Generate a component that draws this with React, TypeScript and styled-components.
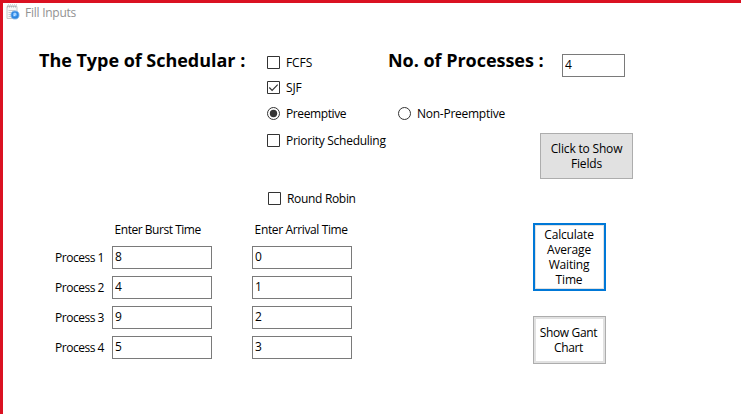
import React, { useState } from 'react';
import styled, { createGlobalStyle } from 'styled-components';

const GlobalStyle = createGlobalStyle`
  * { box-sizing: border-box; }
  body { margin: 0; background: #fff; overflow: hidden; }
`;

const Window = styled.div`
  width: 741px;
  height: 414px;
  background: #fff;
  border: solid #da1122;
  border-width: 3px 0 0 3px;
  color: #000;
  font: 12px/15px 'Open Sans', 'Noto Sans', sans-serif;
`;

const TitleBar = styled.header`
  display: flex;
  align-items: center;
  height: 20px;
  padding: 0 0 1px 3px;
  gap: 5px;
  color: #929292;
  letter-spacing: -0.25px;
`;

const Options = styled.section`
  display: grid;
  grid-template-columns: 228px 121px 1fr;
  height: 196px;
  padding-left: 36px;
`;

const Heading = styled.h1`
  margin: 25px 0 0;
  font-size: 18px;
  line-height: 24px;
  font-weight: 700;
  letter-spacing: -0.03px;
  white-space: nowrap;
`;

const ChoiceList = styled.div`
  display: flex;
  flex-direction: column;
  padding-top: 31px;
`;

const Choice = styled.label<{ $gap?: number; $indent?: number; $spacing?: number }>`
  display: flex;
  align-items: center;
  gap: 6px;
  height: 17px;
  margin-top: ${p => p.$gap ?? 0}px;
  margin-left: ${p => p.$indent ?? 0}px;
  letter-spacing: ${p => p.$spacing ?? -0.2}px;
  white-space: nowrap;
`;

const Mark = styled.svg`
  width: 13px;
  height: 13px;
  flex: none;
  fill: none;
  stroke: #333;
`;

const RightPanel = styled.div`
  display: flex;
  flex-direction: column;
`;

const Field = styled.input`
  width: 100%;
  height: 23px;
  padding: 0 2px 2px;
  border: 1px solid #7a7a7a;
  border-radius: 0;
  outline: none;
  background: #fff;
  color: #000;
  font: inherit;
`;

const CountRow = styled.div`
  display: grid;
  grid-template-columns: 174px 63px;
  height: 54px;

  input { margin-top: 31px; }
`;

const Button = styled.button<{ $variant?: 'filled' | 'active' | 'framed' }>`
  width: ${p => (p.$variant === 'filled' ? 93 : 73)}px;
  padding: 0;
  border: ${p => (p.$variant === 'active' ? '2px solid #0078d7' : '1px solid #adadad')};
  border-radius: 0;
  background: ${p => (p.$variant === 'filled' ? '#e1e1e1' : '#fff')};
  box-shadow: ${p =>
    p.$variant === 'active'
      ? 'inset 0 0 0 1px #e1e1e1'
      : p.$variant === 'framed'
        ? 'inset 0 0 0 2px #e1e1e1'
        : 'none'};
  color: #000;
  font: inherit;
  letter-spacing: ${p => (p.$variant === 'framed' ? -0.35 : -0.18)}px;
  text-align: center;
  white-space: pre-line;
`;

const ShowFields = styled(Button)`
  height: 46px;
  margin: 11px 0 0 152px;
`;

const Calculate = styled(Button)`
  height: 68px;
  padding-right: 1px;
`;

const ShowChart = styled(Button)`
  height: 48px;
  padding-right: 2px;
`;

const Lower = styled.section`
  display: grid;
  grid-template-columns: 349px 73px;
  column-gap: 181px;
`;

const ProcessTable = styled.div`
  display: grid;
  grid-template-columns: 109px 100px 140px;
  grid-template-rows: 20px repeat(4, 23px);
  row-gap: 7px;
`;

const ColumnTitle = styled.div<{ $spacing: number; $indent?: number }>`
  padding: 3px 0 0 2px;
  margin-left: ${p => p.$indent ?? 0}px;
  text-indent: 0.6px;
  letter-spacing: ${p => p.$spacing}px;
  white-space: nowrap;
`;

const ProcessName = styled.div`
  padding: 4px 0 0 52px;
  letter-spacing: -0.48px;
  white-space: nowrap;
`;

const ArrivalCell = styled.div`
  width: 100px;
  margin-left: 40px;
`;

const Actions = styled.div`
  display: flex;
  flex-direction: column;
  gap: 25px;
  padding-top: 4px;
`;

const AppIcon = () => (
  <svg width="14" height="17" viewBox="0 0 14 17">
    <path d="M1 2.5h10v12H1z" fill="#f7f7f7" stroke="#c9c9c9" />
    <path d="M1 2.5h10" stroke="#aeb4b8" strokeWidth="2" strokeDasharray="1 1" />
    <path d="M2.5 0v3M4.5 0v3M6.5 0v3M8.5 0v3M10.5 0v3" stroke="#c3c7ca" strokeWidth=".7" />
    <path d="M2.5 6.5h7M2.5 8.5h5M2.5 10.5h3M2.5 12.5h3" stroke="#c6cbd0" />
    <circle cx="9" cy="11" r="4.1" fill="#2d86e0" stroke="#8bbcec" strokeWidth=".8" />
    <circle cx="8.8" cy="10.5" r="2" fill="#78bcff" />
    <path d="M9 9v2.2l-1.4.7" fill="none" stroke="#e4f2ff" strokeWidth=".8" />
  </svg>
);

const CheckMark = ({ on }: { on?: boolean }) => (
  <Mark viewBox="0 0 13 13">
    <path d="M.5.5h12v12H.5z" />
    {on && <path d="M2.3 6.5l2.8 2.8 5.6-5.6" strokeWidth="1.2" />}
  </Mark>
);

const RadioMark = ({ on }: { on?: boolean }) => (
  <Mark viewBox="0 0 13 13">
    <circle cx="6.5" cy="6.5" r="6" />
    {on && <circle cx="6.5" cy="6.5" r="3.7" fill="#333" stroke="none" />}
  </Mark>
);

const processes = [
  { burst: '8', arrival: '0' },
  { burst: '4', arrival: '1' },
  { burst: '9', arrival: '2' },
  { burst: '5', arrival: '3' },
];

export default function App() {
  const [count, setCount] = useState('4');

  return (
    <>
      <GlobalStyle />
      <Window>
        <TitleBar>
          <AppIcon />
          Fill Inputs
        </TitleBar>
        <Options>
          <Heading>The Type of Schedular :</Heading>
          <ChoiceList>
            <Choice $spacing={-0.1}><CheckMark />FCFS</Choice>
            <Choice $gap={8} $spacing={-0.1}><CheckMark on />SJF</Choice>
            <Choice $gap={9} $spacing={-0.4}><RadioMark on />Preemptive</Choice>
            <Choice $gap={10} $spacing={-0.27}><CheckMark />Priority Scheduling</Choice>
            <Choice $gap={41} $indent={1} $spacing={-0.32}><CheckMark />Round Robin</Choice>
          </ChoiceList>
          <RightPanel>
            <CountRow>
              <Heading>No. of Processes :</Heading>
              <Field value={count} onChange={e => setCount(e.target.value)} />
            </CountRow>
            <Choice $gap={28} $indent={10} $spacing={-0.26}><RadioMark />Non-Preemptive</Choice>
            <ShowFields $variant="filled">{'Click to Show\nFields'}</ShowFields>
          </RightPanel>
        </Options>
        <Lower>
          <ProcessTable>
            <span />
            <ColumnTitle $spacing={-0.47}>Enter Burst Time</ColumnTitle>
            <ColumnTitle $spacing={-0.37} $indent={40}>Enter Arrival Time</ColumnTitle>
            {processes.map((p, i) => (
              <React.Fragment key={i}>
                <ProcessName>Process {i + 1}</ProcessName>
                <Field defaultValue={p.burst} />
                <ArrivalCell><Field defaultValue={p.arrival} /></ArrivalCell>
              </React.Fragment>
            ))}
          </ProcessTable>
          <Actions>
            <Calculate $variant="active">{'Calculate\nAverage\nWaiting\nTime'}</Calculate>
            <ShowChart $variant="framed">{'Show Gant\nChart'}</ShowChart>
          </Actions>
        </Lower>
      </Window>
    </>
  );
}
